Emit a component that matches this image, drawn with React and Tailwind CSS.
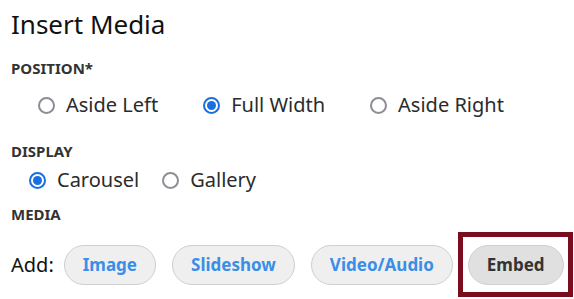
import React from "react";

function Radio({ checked, label }) {
  return (
    <label className="flex items-center gap-[11px]">
      {checked ? (
        <span className="w-[17px] h-[17px] rounded-full border-[2px] border-[#1a6fe0] flex items-center justify-center">
          <span className="w-[9px] h-[9px] rounded-full bg-[#1a6fe0]" />
        </span>
      ) : (
        <span className="w-[17px] h-[17px] rounded-full border-[2px] border-[#8e8c95]" />
      )}
      <span className="text-[20px] leading-[24px] text-[#2b2b2b]">{label}</span>
    </label>
  );
}

function Btn({ children, active }) {
  return (
    <button
      className={
        "h-[40px] px-[18px] rounded-full border border-[#cfcfcf] text-[17px] font-bold leading-[24px] " +
        (active ? "bg-[#e0e0e0] text-[#333333]" : "bg-[#efefef] text-[#3a8ee6]")
      }
    >
      {children}
    </button>
  );
}

export default function App() {
  return (
    <div
      className="w-[574px] h-[299px] bg-white pl-[11px] overflow-hidden"
      style={{ fontFamily: '"Noto Sans", sans-serif' }}
    >
      <h1 className="text-[26px] leading-[34px] text-[#111111] pt-[7px]">Insert Media</h1>
      <div className="mt-[18px] text-[15px] leading-[18px] font-bold text-[#333333]">POSITION*</div>
      <div className="mt-[16px] ml-[27px] flex gap-[45px]">
        <Radio label="Aside Left" />
        <Radio checked label="Full Width" />
        <Radio label="Aside Right" />
      </div>
      <div className="mt-[25px] text-[15px] leading-[18px] font-bold text-[#333333]">DISPLAY</div>
      <div className="mt-[8px] ml-[18px] flex gap-[23px]">
        <Radio checked label="Carousel" />
        <Radio label="Gallery" />
      </div>
      <div className="mt-[13px] text-[15px] leading-[18px] font-bold text-[#333333]">MEDIA</div>
      <div className="mt-[9px] flex items-center">
        <span className="text-[20px] text-[#111111] mr-[10px]">Add:</span>
        <div className="flex items-center gap-[16px]">
          <Btn>Image</Btn>
          <Btn>Slideshow</Btn>
          <Btn>Video/Audio</Btn>
          <div className="-ml-[11px] border-[5px] border-[#7b0c1e] pl-[5px] pr-[4px] pt-[8px] pb-[7px]">
            <Btn active>Embed</Btn>
          </div>
        </div>
      </div>
    </div>
  );
}
